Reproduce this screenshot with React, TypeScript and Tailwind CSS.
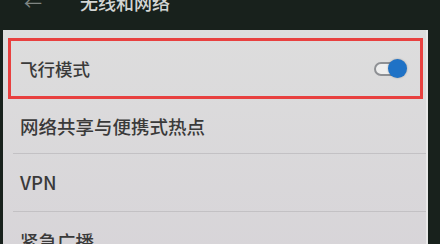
import { type ReactNode } from "react"

interface RowProps {
  children: ReactNode
  height: string
  divider?: boolean
}

function Row({ children, height, divider = true }: RowProps) {
  return (
    <div className={`flex flex-col ${height}`}>
      <div className="flex flex-1 items-center pl-[17px] text-[18.5px] font-medium leading-none text-[#3a3a3a]">
        {children}
      </div>
      {divider && <div className="ml-[10px] h-px bg-[#c3c1c4]" />}
    </div>
  )
}

function Toggle() {
  return (
    <div className="relative h-[19px] w-[33px]">
      <div className="absolute left-0 top-[3px] h-[14px] w-[24px] rounded-full border-2 border-[#8e9094] bg-[#eeeeee]" />
      <div className="absolute right-0 top-0 h-[19px] w-[19px] rounded-full bg-[#1f72c6] shadow-[0_0_2px_rgba(0,0,0,0.3)]" />
    </div>
  )
}

export default function App() {
  return (
    <div className="flex h-[244px] w-[440px] flex-col overflow-hidden bg-[#18211c] font-['Noto_Sans_CJK_SC','Noto_Sans',sans-serif]">
      <header className="h-[30px] shrink-0 overflow-hidden">
        <div className="-mt-[10px] flex items-center pl-[24px]">
          <span className="text-[18px] leading-[24px] text-[#7f8582]">←</span>
          <span className="ml-[38px] text-[18px] font-medium leading-[24px] text-[#d2d5d3]">无线和网络</span>
        </div>
      </header>

      <div className="flex flex-1">
        <main className="ml-[3px] flex w-[423px] flex-col bg-gradient-to-b from-[#dddddd] to-[#d7d4d8] pt-[8px]">
          <div className="ml-[5px] mr-[3px] flex h-[61px] items-center justify-between border-[3px] border-[#e8403f] pl-[9px] pr-[13px]">
            <span className="text-[17.5px] font-medium leading-none text-[#3a3a3a]">飞行模式</span>
            <Toggle />
          </div>
          <Row height="h-[55px]">网络共享与便携式热点</Row>
          <Row height="h-[58px]">VPN</Row>
          <Row height="h-[58px]" divider={false}>紧急广播</Row>
        </main>
        <div className="w-[2px] bg-[#e8e8e8]" />
      </div>
    </div>
  )
}
